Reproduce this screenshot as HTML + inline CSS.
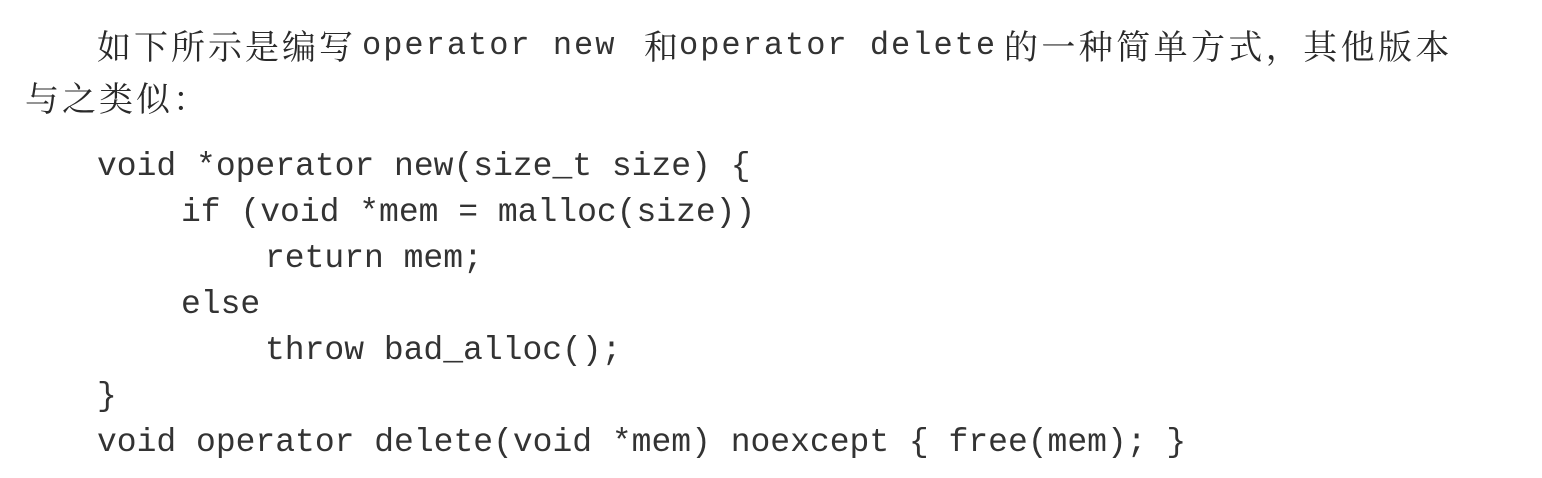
<!DOCTYPE html>
<html><head><meta charset="utf-8"><style>
body{margin:0;width:1542px;height:478px;background:#fff;overflow:hidden;position:relative;color:#2a2a2a}
.l{position:absolute;white-space:pre;line-height:46px}
.c{font-family:"Noto Serif CJK SC","Noto Sans CJK SC",serif;font-size:34px;letter-spacing:3px}
.m{font-family:"Liberation Mono",monospace;font-size:32px;letter-spacing:2px;color:#333;top:23px !important}
.code{font-family:"Liberation Mono",monospace;font-size:33px;color:#333}
</style></head><body>
<div class="l c" style="left:97px;top:22px">如下所示是编写</div>
<div class="l m" style="left:362px;top:22px">operator new</div>
<div class="l c" style="left:644px;top:22px">和</div>
<div class="l m" style="left:679px;top:22px">operator delete</div>
<div class="l c" style="left:1004px;top:22px;letter-spacing:3.4px">的一种简单方式，其他版本</div>
<div class="l c" style="left:25px;top:74px">与之类似：</div>
<div class="l code" style="left:97px;top:144px">void *operator new(size_t size) {</div>
<div class="l code" style="left:181px;top:190px">if (void *mem = malloc(size))</div>
<div class="l code" style="left:265px;top:236px">return mem;</div>
<div class="l code" style="left:181px;top:282px">else</div>
<div class="l code" style="left:265px;top:328px">throw bad_alloc();</div>
<div class="l code" style="left:97px;top:374px">}</div>
<div class="l code" style="left:97px;top:420px">void operator delete(void *mem) noexcept { free(mem); }</div>
</body></html>
